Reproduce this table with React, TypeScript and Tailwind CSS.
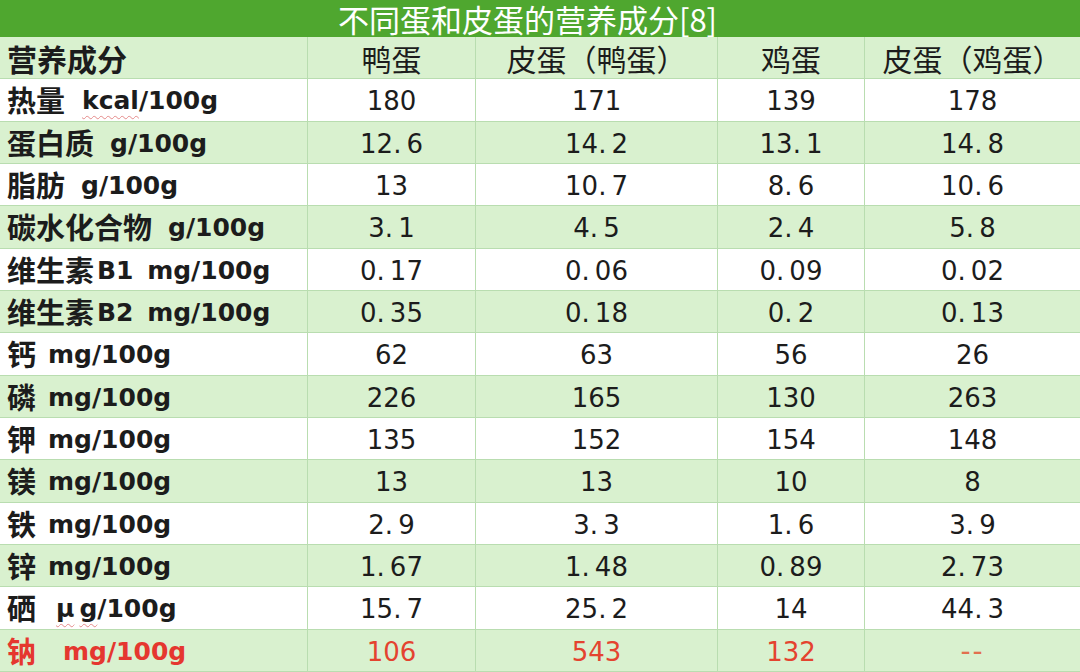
import React from "react";

type Row = { cjk: string; latin: React.ReactNode; gap?: string; vals: string[]; red?: boolean };

const wavy = "underline decoration-wavy decoration-[#e58a8a] decoration-1 underline-offset-[6px]";

const rows: Row[] = [
  { cjk: "热量", latin: <><span className={wavy}>kcal</span>/100g</>, gap: "ml-[17px]", vals: ["180", "171", "139", "178"] },
  { cjk: "蛋白质", latin: "g/100g", gap: "ml-[16px]", vals: ["12.6", "14.2", "13.1", "14.8"] },
  { cjk: "脂肪", latin: "g/100g", gap: "ml-[16px]", vals: ["13", "10.7", "8.6", "10.6"] },
  { cjk: "碳水化合物", latin: "g/100g", gap: "ml-[16px]", vals: ["3.1", "4.5", "2.4", "5.8"] },
  { cjk: "维生素", latin: "B1 mg/100g", gap: "ml-[3px]", vals: ["0.17", "0.06", "0.09", "0.02"] },
  { cjk: "维生素", latin: "B2 mg/100g", gap: "ml-[3px]", vals: ["0.35", "0.18", "0.2", "0.13"] },
  { cjk: "钙", latin: "mg/100g", gap: "ml-[12px]", vals: ["62", "63", "56", "26"] },
  { cjk: "磷", latin: "mg/100g", gap: "ml-[12px]", vals: ["226", "165", "130", "263"] },
  { cjk: "钾", latin: "mg/100g", gap: "ml-[12px]", vals: ["135", "152", "154", "148"] },
  { cjk: "镁", latin: "mg/100g", gap: "ml-[12px]", vals: ["13", "13", "10", "8"] },
  { cjk: "铁", latin: "mg/100g", gap: "ml-[12px]", vals: ["2.9", "3.3", "1.6", "3.9"] },
  { cjk: "锌", latin: "mg/100g", gap: "ml-[12px]", vals: ["1.67", "1.48", "0.89", "2.73"] },
  { cjk: "硒", latin: <><span className={wavy}><span className="mr-[5px]">μ</span>g</span>/100g</>, gap: "ml-[20px]", vals: ["15.7", "25.2", "14", "44.3"] },
  { cjk: "钠", latin: "mg/100g", gap: "ml-[27px]", vals: ["106", "543", "132", "--"], red: true },
];

const grid = "grid grid-cols-[308px_168px_242px_147px_215px] h-[42.33px] border-b border-[#b9ddb0]";
const cellBase = "flex items-center border-r border-[#b9ddb0] whitespace-nowrap leading-none";
const cjkFont = { fontFamily: '"Noto Sans CJK SC", "Noto Sans", sans-serif' };
const latinFont = { fontFamily: '"DejaVu Sans", "Noto Sans CJK SC", sans-serif' };

function Num({ v }: { v: string }) {
  const k = v.indexOf(".");
  if (k < 0) return <>{v}</>;
  return (
    <>
      {v.slice(0, k)}
      <span className="mr-[5px]">.</span>
      {v.slice(k + 1)}
    </>
  );
}

export default function App() {
  return (
    <div className="w-[1080px] h-[672px] overflow-hidden bg-white text-[#1c1c1c]" style={cjkFont}>
      <div className="h-[37px] bg-[#4fa72f] flex items-center justify-center text-white text-[31px] leading-none pr-[25px]">
        不同蛋和皮蛋的营养成分[8]
      </div>
      <div className={`${grid} bg-[#d9f1cf]`}>
        <div className={`${cellBase} pl-[7px] font-bold text-[30px]`}>营养成分</div>
        <div className={`${cellBase} justify-center text-[30px]`}>鸭蛋</div>
        <div className={`${cellBase} justify-center text-[30px]`}>皮蛋（鸭蛋）</div>
        <div className={`${cellBase} justify-center text-[30px]`}>鸡蛋</div>
        <div className={`${cellBase} justify-center text-[30px] border-r-0`}>皮蛋（鸡蛋）</div>
      </div>
      {rows.map((r, i) => (
        <div
          key={i}
          className={`${grid} ${i % 2 === 0 ? "bg-white" : "bg-[#d9f1cf]"} ${r.red ? "text-[#e5372f]" : ""}`}
        >
          <div className={`${cellBase} pl-[7px] font-bold`}>
            <span className="text-[29px]">{r.cjk}</span>
            <span className={`text-[25px] whitespace-pre [word-spacing:5px] pt-[2px] ${r.gap ?? ""}`} style={latinFont}>
              {r.latin}
            </span>
          </div>
          {r.vals.map((v, j) => (
            <div
              key={j}
              className={`${cellBase} justify-center pt-[3px] ${j === 3 ? "border-r-0" : ""} ${
                v === "--" ? "text-[#e2704f] text-[28px] tracking-[2px]" : "text-[26px]"
              } ${r.red && v !== "--" ? "text-[#e4432f]" : ""}`}
              style={latinFont}
            >
              <Num v={v} />
            </div>
          ))}
        </div>
      ))}
    </div>
  );
}
